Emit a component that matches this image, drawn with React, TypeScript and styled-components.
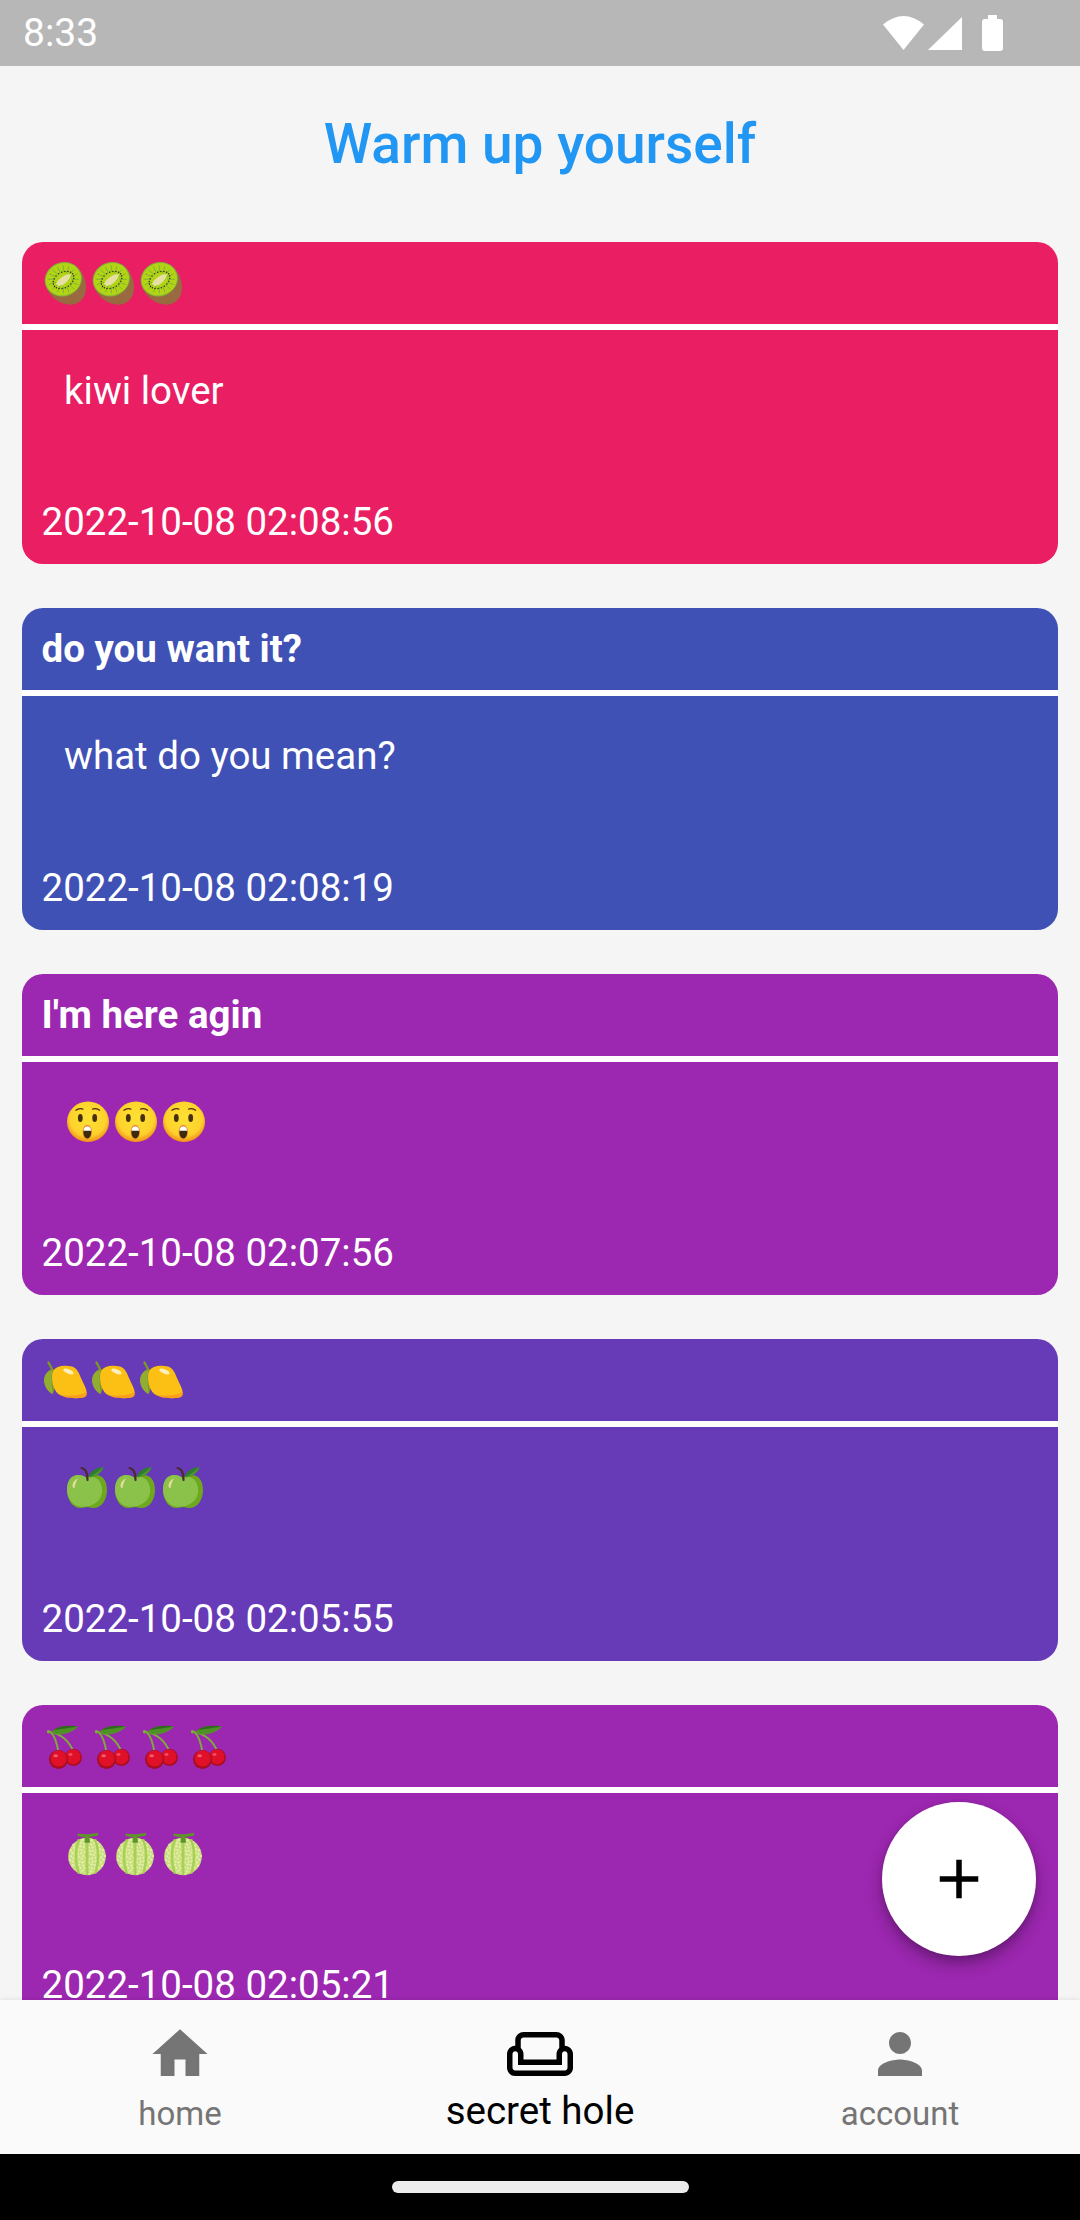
import React from 'react';
import styled, { createGlobalStyle } from 'styled-components';
import { MdAdd, MdHome, MdOutlineWeekend, MdPerson } from 'react-icons/md';

const GlobalStyle = createGlobalStyle`
    html, body {
        margin: 0;
        padding: 0;
        background: #000;
        font-family: Roboto, "Liberation Sans", sans-serif;
    }
`;

const KiwiEmoji = () => {
    const rays = Array.from({ length: 16 }, (_, i) => (i * Math.PI * 2) / 16);
    const seeds = Array.from({ length: 20 }, (_, i) => (i * Math.PI * 2) / 20);
    return (
        <EmojiSvg viewBox="0 0 48 48">
            <path d="M4 26 C6 36 16 45.5 29 45.7 C38 45.5 44 38 44 29 C44 16 36 6 24 5 Z" fill="#99693f" />
            <ellipse cx="21.3" cy="20.3" rx="18.8" ry="17" fill="#7fb239" transform="rotate(-20 21.3 20.3)" />
            <ellipse cx="21.3" cy="20.3" rx="17.8" ry="16" fill="#b3d315" transform="rotate(-20 21.3 20.3)" />
            {rays.map((a, i) => (
                <line
                    key={i}
                    x1={21.3 + Math.cos(a) * 8}
                    y1={20.3 + Math.sin(a) * 7}
                    x2={21.3 + Math.cos(a) * 15.5}
                    y2={20.3 + Math.sin(a) * 14}
                    stroke="#74b23e"
                    strokeWidth="0.9"
                />
            ))}
            <path d="M14 25 C16.5 19.5 23 15 29 15 C28 20.5 22.5 26.5 16.5 27 Z" fill="#e5dfa6" />
            {seeds.map((a, i) => (
                <circle
                    key={i}
                    cx={21.5 + Math.cos(a) * 10.2 - Math.sin(a) * 1.4}
                    cy={21 + Math.sin(a) * 8.6 - Math.cos(a) * 1.4}
                    r="0.75"
                    fill="#2a2a1c"
                />
            ))}
        </EmojiSvg>
    );
};

const WowEmoji = () => (
    <EmojiSvg viewBox="0 0 48 48">
        <defs>
            <radialGradient id="wowFace" cx="50%" cy="42%" r="55%">
                <stop offset="0%" stopColor="#fee133" />
                <stop offset="78%" stopColor="#fdd22c" />
                <stop offset="100%" stopColor="#f49c1c" />
            </radialGradient>
        </defs>
        <ellipse cx="24" cy="23.7" rx="21" ry="20.2" fill="url(#wowFace)" />
        <ellipse cx="16.3" cy="20" rx="2.4" ry="4" fill="#45300f" />
        <ellipse cx="30.7" cy="20" rx="2.4" ry="4" fill="#45300f" />
        <path d="M11.5 12.5 Q15 9.6 19.5 11.2" stroke="#45300f" strokeWidth="1.1" fill="none" />
        <path d="M28 11.2 Q32.5 9.6 36 12.5" stroke="#45300f" strokeWidth="1.1" fill="none" />
        <ellipse cx="23.3" cy="34" rx="4.8" ry="7.2" fill="#f3922b" />
        <ellipse cx="23.3" cy="34.3" rx="3.9" ry="6.2" fill="#3d2b0e" />
        <path d="M19.5 32.8 C19.7 29.8 21 28.3 23.3 28.3 C25.6 28.3 26.9 29.8 27.1 32.8 Z" fill="#fff" />
    </EmojiSvg>
);

const LemonEmoji = () => (
    <EmojiSvg viewBox="0 0 48 48">
        <path d="M6.5 6.5 L11 15" stroke="#7c9a22" strokeWidth="2.4" strokeLinecap="round" />
        <path d="M10 13 C4 15 1 22 2.4 27 C3.4 32 7 36 10.5 38 C14 32 14.5 20 10 13 Z" fill="#7f9d26" />
        <path d="M10 14 C9 22 9.5 30 10.5 38 C7 36 3.4 32 2.4 27 C1 22 4 15 10 14 Z" fill="#93ad33" />
        <path d="M11 15 C14 10 22 8.5 30 10.5 C35 12 37 17 39 22 C40.5 26 43.5 30 44.5 35 C45 39 44 41 41 41.5 C33 43 22 42 16.5 38 C11 34 8.5 22 11 15 Z" fill="#fcc014" />
        <path d="M16.5 38 C25 40.5 36 40 44.6 36.5 C45 39.5 44 41 41 41.5 C33 43 22 42 16.5 38 Z" fill="#f99f1c" />
        <ellipse cx="26.5" cy="15.5" rx="5.5" ry="2.2" fill="#fdeebb" transform="rotate(22 26.5 15.5)" />
    </EmojiSvg>
);

const AppleEmoji = () => (
    <EmojiSvg viewBox="0 0 48 48">
        <path d="M23 15 C14 9 3 12 3 27 C3 37 9 45.5 17 45 C19.5 45 21.5 44 23 44 C24.5 44 26.5 45 29 45 C37 45.5 43 37 43 27 C43 12 32 9 23 15 Z" fill="#6ea81f" />
        <path d="M23 15 C14 9 3 12 3 27 C3 35 9 43 16 43.5 C24 45 36 41 38 30 C39.5 20 32 10 23 15 Z" fill="#8bc34a" />
        <path d="M8.5 23 C8.5 19.5 11 16.5 14 15.5 C12 18.5 11 22 10.5 25 C9.8 25.5 8.5 24.5 8.5 23 Z" fill="#e3dca0" />
        <path d="M17.5 5 C21 5.5 23.5 10 23.5 17" stroke="#4a2a2a" strokeWidth="2.2" fill="none" strokeLinecap="round" />
        <path d="M24.5 14 C27 7 33 4.5 39.5 4 C37.5 10 31 15 24.5 14 Z" fill="#2e7d32" />
        <path d="M24.5 14 C30 12 35 8 39.5 4 C37.5 10 31 15 24.5 14 Z" fill="#4b9a26" />
    </EmojiSvg>
);

const CherryEmoji = () => (
    <EmojiSvg viewBox="0 0 48 48">
        <path d="M8 10 C12 12 15.5 22 16.5 31" stroke="#7cad38" strokeWidth="1.9" fill="none" />
        <path d="M8 10 C17 11 27 18 31 29" stroke="#7cad38" strokeWidth="1.9" fill="none" />
        <path d="M9.5 10.5 C13 4 25 3 36 4.5 C30 11 19 15 9.5 10.5 Z" fill="#4f9125" />
        <path d="M11 8 C17 4 27 3 36 4.5 C28 6 18 7 11 8 Z" fill="#2f6a1a" />
        <circle cx="6.5" cy="9.7" r="1.8" fill="#7cad38" />
        <circle cx="31.5" cy="35.5" r="8.5" fill="#a70d20" />
        <circle cx="31.2" cy="34.8" r="7.4" fill="#df1028" />
        <circle cx="16.5" cy="37.5" r="9.5" fill="#a70d20" />
        <circle cx="16.7" cy="36.5" r="8" fill="#df1028" />
        <ellipse cx="13.7" cy="33.7" rx="2.4" ry="1.5" fill="#f3596a" />
        <ellipse cx="28.6" cy="32.5" rx="1.9" ry="1.2" fill="#f3596a" />
    </EmojiSvg>
);

const MelonEmoji = () => {
    const dots = Array.from({ length: 90 }, (_, i) => ({
        x: 23 + Math.cos(i * 2.4) * Math.sqrt(i / 90) * 18,
        y: 27.5 + Math.sin(i * 2.4) * Math.sqrt(i / 90) * 18,
    }));
    return (
        <EmojiSvg viewBox="0 0 48 48">
            <circle cx="23" cy="27.5" r="18.8" fill="#c9df7c" />
            {dots.map((d, i) => (
                <circle key={i} cx={d.x} cy={d.y} r="1.2" fill="#e3eeab" />
            ))}
            <path d="M21.5 9 H24.5 V46 H21.5 Z" fill="#a8d054" />
            <path d="M15 10.5 C11 20 11 35 15 44.5" stroke="#a8d054" strokeWidth="2.6" fill="none" />
            <path d="M31 10.5 C35 20 35 35 31 44.5" stroke="#a8d054" strokeWidth="2.6" fill="none" />
            <path d="M13.7 4.2 C19 5.6 27 5.6 34 3.8 V6.6 C28 8 26 8 25.5 8 L26 13.7 H20.5 L21 8 C20 8 17 8 13.7 7 Z" fill="#5f9429" />
        </EmojiSvg>
    );
};

interface RichLine {
    text?: string;
    emoji?: React.ComponentType;
    count?: number;
}

const cards: { color: string; head: RichLine; body: RichLine; date: string }[] = [
    {
        color: '#e91e63',
        head: { emoji: KiwiEmoji, count: 3 },
        body: { text: 'kiwi lover' },
        date: '2022-10-08 02:08:56',
    },
    {
        color: '#3f51b5',
        head: { text: 'do you want it?' },
        body: { text: 'what do you mean?' },
        date: '2022-10-08 02:08:19',
    },
    {
        color: '#9c27b0',
        head: { text: "I'm here agin" },
        body: { emoji: WowEmoji, count: 3 },
        date: '2022-10-08 02:07:56',
    },
    {
        color: '#673ab7',
        head: { emoji: LemonEmoji, count: 3 },
        body: { emoji: AppleEmoji, count: 3 },
        date: '2022-10-08 02:05:55',
    },
    {
        color: '#9c27b0',
        head: { emoji: CherryEmoji, count: 4 },
        body: { emoji: MelonEmoji, count: 3 },
        date: '2022-10-08 02:05:21',
    },
];

const renderLine = (line: RichLine) => {
    if (line.text) return line.text;
    const Emoji = line.emoji as React.ComponentType;
    return Array.from({ length: line.count ?? 1 }, (_, i) => <Emoji key={i} />);
};

export default function App() {
    return (
        <Screen>
            <GlobalStyle />
            <StatusBar>
                <Clock>8:33</Clock>
                <StatusIcons>
                    <svg width="41" height="34" viewBox="0 0 41 34">
                        <path d="M0 8.5 Q20.5 -8.5 41 8.5 L20.5 34 Z" fill="#fff" />
                    </svg>
                    <svg width="34" height="33" viewBox="0 0 34 33">
                        <path d="M0 33 L34 0 V33 Z" fill="#fff" />
                    </svg>
                    <Battery />
                </StatusIcons>
            </StatusBar>
            <Main>
                <Title>Warm up yourself</Title>
                <CardList>
                    {cards.map((card) => (
                        <Card key={card.date} $color={card.color}>
                            <CardHead>{renderLine(card.head)}</CardHead>
                            <CardBody>
                                <Message>{renderLine(card.body)}</Message>
                                <Stamp>{card.date}</Stamp>
                            </CardBody>
                        </Card>
                    ))}
                </CardList>
                <Fab>
                    <MdAdd size={66} color="#000" />
                </Fab>
            </Main>
            <BottomNav>
                <NavItem>
                    <MdHome size={66} />
                    <NavLabel>home</NavLabel>
                </NavItem>
                <NavItem $active>
                    <MdOutlineWeekend size={66} />
                    <NavLabel $active>secret hole</NavLabel>
                </NavItem>
                <NavItem>
                    <MdPerson size={66} />
                    <NavLabel>account</NavLabel>
                </NavItem>
            </BottomNav>
            <GestureBar>
                <HomeIndicator />
            </GestureBar>
        </Screen>
    );
}

const Screen = styled.div`
    width: 1080px;
    height: 2220px;
    display: flex;
    flex-direction: column;
    overflow: hidden;
    background: #f5f5f5;
`;

const StatusBar = styled.div`
    height: 66px;
    flex: none;
    display: flex;
    align-items: center;
    justify-content: space-between;
    padding: 0 77px 0 23px;
    box-sizing: border-box;
    background: #b7b7b7;
`;

const Clock = styled.span`
    color: #fff;
    font-size: 39px;
    line-height: 66px;
`;

const StatusIcons = styled.div`
    display: flex;
    align-items: center;
    gap: 4px;
`;

const Battery = styled.div`
    position: relative;
    width: 21px;
    height: 32px;
    margin: 4px 0 0 16px;
    border-radius: 3px;
    background: #fff;

    &::before {
        content: '';
        position: absolute;
        top: -4px;
        left: 6px;
        width: 9px;
        height: 4px;
        background: #fff;
    }
`;

const Main = styled.main`
    position: relative;
    flex: 1;
    min-height: 0;
    overflow: hidden;
`;

const Title = styled.h1`
    height: 176px;
    margin: 0;
    padding-bottom: 20px;
    box-sizing: border-box;
    display: flex;
    align-items: center;
    justify-content: center;
    font-size: 55px;
    font-weight: 500;
    color: #2196f3;
`;

const CardList = styled.div`
    display: flex;
    flex-direction: column;
    gap: 44px;
    padding: 0 22px;
`;

const Card = styled.article<{ $color: string }>`
    flex: none;
    height: 321.75px;
    display: flex;
    flex-direction: column;
    border-radius: 21px;
    overflow: hidden;
    color: #fff;
    background: ${({ $color }) => $color};
`;

const CardHead = styled.div`
    height: 82px;
    flex: none;
    display: flex;
    align-items: center;
    padding: 0 19px 0 19.5px;
    border-bottom: 6px solid #fff;
    font-size: 38.5px;
    font-weight: 700;
`;

const CardBody = styled.div`
    flex: 1;
    display: flex;
    flex-direction: column;
    justify-content: space-between;
    padding: 36px 20px 19px 19.5px;
`;

const Message = styled.div`
    height: 48px;
    display: flex;
    align-items: center;
    padding-left: 22.5px;
    font-size: 38.5px;
`;

const Stamp = styled.div`
    font-size: 38.5px;
    line-height: 46px;
`;

const EmojiSvg = styled.svg`
    width: 48px;
    height: 48px;
    flex: none;
`;

const Fab = styled.button`
    position: absolute;
    right: 44px;
    bottom: 44px;
    width: 154px;
    height: 154px;
    padding: 0;
    display: flex;
    align-items: center;
    justify-content: center;
    border: none;
    border-radius: 50%;
    background: #fff;
    box-shadow: 0 8px 16px rgba(0, 0, 0, 0.28), 0 3px 6px rgba(0, 0, 0, 0.12);
`;

const BottomNav = styled.nav`
    height: 154px;
    flex: none;
    display: grid;
    grid-template-columns: repeat(3, 1fr);
    background: #fafafa;
    box-shadow: 0 -1px 4px rgba(0, 0, 0, 0.08);
    z-index: 1;
`;

const NavItem = styled.div<{ $active?: boolean }>`
    display: flex;
    flex-direction: column;
    align-items: center;
    padding-top: 21px;
    color: ${({ $active }) => ($active ? '#000' : '#757575')};
`;

const NavLabel = styled.span<{ $active?: boolean }>`
    font-size: ${({ $active }) => ($active ? '38.5px' : '33px')};
    line-height: 38px;
    margin-top: ${({ $active }) => ($active ? '5px' : '8px')};
`;

const GestureBar = styled.div`
    height: 66px;
    flex: none;
    display: flex;
    justify-content: center;
    padding-top: 27px;
    box-sizing: border-box;
    background: #000;
`;

const HomeIndicator = styled.div`
    width: 297px;
    height: 12px;
    border-radius: 6px;
    background: #ececec;
`;
